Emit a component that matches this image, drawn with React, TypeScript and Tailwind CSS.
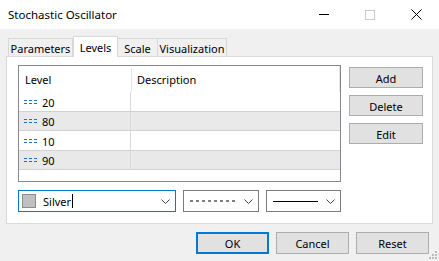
import React from "react";

const Chevron = () => (
  <svg width="9" height="5" viewBox="0 0 9 5" className="block">
    <polyline points="0.5,0.5 4.5,4.5 8.5,0.5" fill="none" stroke="#444" strokeWidth="1" />
  </svg>
);

const DashIcon = () => (
  <svg width="14" height="6" viewBox="0 0 14 6" className="block">
    <line x1="1" y1="1.5" x2="14" y2="1.5" stroke="#1a6fd0" strokeWidth="1" strokeDasharray="3 2" />
    <line x1="1" y1="4.5" x2="14" y2="4.5" stroke="#1a6fd0" strokeWidth="1" strokeDasharray="3 2" />
  </svg>
);

const levels = ["20", "80", "10", "90"];

export default function App() {
  return (
    <div className="relative w-[439px] h-[261px] bg-[#f0f0f0] overflow-hidden text-[11px] text-black font-['Noto_Sans',sans-serif] leading-none">
      {/* Title bar */}
      <div className="h-[29px] bg-white flex items-center">
        <div className="pl-[8px] text-[11.5px] text-black">Stochastic Oscillator</div>
        <div className="ml-auto flex h-full">
          <div className="w-[46px] h-full flex items-center justify-center">
            <div className="w-[10px] h-px bg-black" />
          </div>
          <div className="w-[46px] h-full flex items-center justify-center">
            <div className="w-[10px] h-[10px] border border-[#cccccc]" />
          </div>
          <div className="w-[46px] h-full flex items-center justify-center">
            <svg width="11" height="11" viewBox="0 0 11 11">
              <line x1="0.5" y1="0.5" x2="10.5" y2="10.5" stroke="#000" strokeWidth="1" />
              <line x1="10.5" y1="0.5" x2="0.5" y2="10.5" stroke="#000" strokeWidth="1" />
            </svg>
          </div>
        </div>
      </div>

      {/* Body */}
      <div className="px-[6px] pt-[7px]">
        {/* Tabs */}
        <div className="flex items-end pl-[2px] h-[20px] relative z-10">
          <div className="h-[18px] w-[65px] border border-b-0 border-[#d9d9d9] bg-[#f0f0f0] flex items-center justify-center pt-[2px]">
            Parameters
          </div>
          <div className="h-[21px] w-[45px] -mb-px border border-b-0 border-[#d9d9d9] bg-white flex items-start justify-center pt-[5px]">
            Levels
          </div>
          <div className="h-[18px] w-[40px] border border-b-0 border-l-0 border-[#d9d9d9] bg-[#f0f0f0] flex items-center justify-center pt-[2px]">
            Scale
          </div>
          <div className="h-[18px] w-[69px] border border-b-0 border-l-0 border-[#d9d9d9] bg-[#f0f0f0] flex items-center justify-center pt-[2px]">
            Visualization
          </div>
        </div>

        {/* Panel */}
        <div className="h-[168px] border border-[#d9d9d9] bg-white pl-[11px] pt-[8px]">
          <div className="flex">
            {/* List */}
            <div className="w-[323px] h-[117px] border border-[#828790] bg-white flex flex-col">
              <div className="h-[26px] flex relative">
                <div className="w-[112px] h-full flex items-center pl-[6px] pt-[1px]">Level</div>
                <div className="w-px h-[24px] self-end bg-[#e5e5e5]" />
                <div className="flex-1 h-full flex items-center pl-[5px] pt-[1px] border-r border-[#e5e5e5]">Description</div>
              </div>
              {levels.map((l, i) => (
                <div
                  key={l}
                  className={
                    i % 2 === 1
                      ? "h-[20px] flex bg-[#e9e9e9] border-b border-t border-[#d2d2d2] -mt-px"
                      : "h-[20px] flex bg-white"
                  }
                >
                  <div className="w-[112px] h-full flex items-center pl-[4px] gap-[5px] border-r border-[#dadada]">
                    <DashIcon />
                    <span className="pt-[1px]">{l}</span>
                  </div>
                  <div className="flex-1" />
                </div>
              ))}
            </div>

            {/* Side buttons */}
            <div className="ml-[8px] pt-[2px] flex flex-col gap-[7px]">
              {["Add", "Delete", "Edit"].map((b) => (
                <div
                  key={b}
                  className="w-[74px] h-[21px] bg-[#e1e1e1] border border-[#adadad] flex items-center justify-center pt-[1px]"
                >
                  {b}
                </div>
              ))}
            </div>
          </div>

          {/* Combos */}
          <div className="flex mt-[8px] gap-[7px]">
            <div className="w-[158px] h-[22px] border border-[#0078d7] flex items-center pl-[3px] pr-[5px]">
              <div className="w-[14px] h-[14px] border border-[#8c8c8c] bg-[#c0c0c0]" />
              <span className="ml-[7px] pt-[1px]">Silver</span>
              <div className="w-px h-[14px] bg-black ml-[1px]" />
              <div className="ml-auto">
                <Chevron />
              </div>
            </div>
            <div className="w-[76px] h-[22px] border border-[#7a7a7a] flex items-center pl-[6px] pr-[5px]">
              <svg width="46" height="2" viewBox="0 0 46 2" className="block">
                <line x1="0" y1="1" x2="46" y2="1" stroke="#000" strokeWidth="1" strokeDasharray="3 3" />
              </svg>
              <div className="ml-auto">
                <Chevron />
              </div>
            </div>
            <div className="w-[75px] h-[22px] border border-[#7a7a7a] flex items-center pl-[6px] pr-[5px]">
              <div className="w-[45px] h-px bg-black" />
              <div className="ml-auto">
                <Chevron />
              </div>
            </div>
          </div>
        </div>

        {/* Bottom buttons */}
        <div className="flex justify-end gap-[7px] pr-[4px] mt-[8px]">
          <div className="w-[73px] h-[22px] bg-[#e1e1e1] border-2 border-[#0078d7] flex items-center justify-center pt-[1px]">
            OK
          </div>
          <div className="w-[73px] h-[22px] bg-[#e1e1e1] border border-[#adadad] flex items-center justify-center pt-[1px]">
            Cancel
          </div>
          <div className="w-[73px] h-[22px] bg-[#e1e1e1] border border-[#adadad] flex items-center justify-center pt-[1px]">
            Reset
          </div>
        </div>
      </div>

      {/* Resize grip */}
      <svg width="9" height="9" viewBox="0 0 9 9" className="absolute right-[1px] bottom-[1px]">
        <rect x="6" y="0" width="2" height="2" fill="#bdbdbd" />
        <rect x="3" y="3" width="2" height="2" fill="#bdbdbd" />
        <rect x="6" y="3" width="2" height="2" fill="#bdbdbd" />
        <rect x="0" y="6" width="2" height="2" fill="#bdbdbd" />
        <rect x="3" y="6" width="2" height="2" fill="#bdbdbd" />
        <rect x="6" y="6" width="2" height="2" fill="#bdbdbd" />
      </svg>
    </div>
  );
}
